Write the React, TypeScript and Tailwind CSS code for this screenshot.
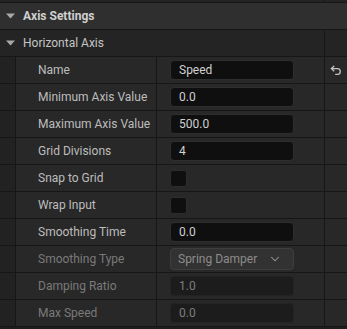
import { ChevronDown } from "lucide-react";

type Row = {
  label: string;
  kind: "text" | "check" | "select";
  value?: string;
  disabled?: boolean;
  reset?: boolean;
};

const rows: Row[] = [
  { label: "Name", kind: "text", value: "Speed", reset: true },
  { label: "Minimum Axis Value", kind: "text", value: "0.0" },
  { label: "Maximum Axis Value", kind: "text", value: "500.0" },
  { label: "Grid Divisions", kind: "text", value: "4" },
  { label: "Snap to Grid", kind: "check" },
  { label: "Wrap Input", kind: "check" },
  { label: "Smoothing Time", kind: "text", value: "0.0" },
  { label: "Smoothing Type", kind: "select", value: "Spring Damper", disabled: true },
  { label: "Damping Ratio", kind: "text", value: "1.0", disabled: true },
  { label: "Max Speed", kind: "text", value: "0.0", disabled: true },
];

function Caret() {
  return (
    <svg width="9" height="6" viewBox="0 0 9 6" className="shrink-0">
      <path d="M0 0.5 H9 L4.5 5.5 Z" fill="#a8a8a8" />
    </svg>
  );
}

function ResetIcon() {
  return (
    <svg width="12" height="11" viewBox="0 0 12 11" fill="none" stroke="#c4c4c4" strokeWidth="1.3">
      <path d="M4.2 1 L1.4 3.6 L4.2 6.2" />
      <path d="M1.6 3.6 H7.4 a2.9 2.9 0 0 1 0 5.8 H5.2" />
    </svg>
  );
}

function Value({ row }: { row: Row }) {
  if (row.kind === "check") {
    return <div className="w-[17px] h-[17px] rounded-[3px] bg-[#0f0f0f] border border-[#2c2c2c]" />;
  }
  if (row.kind === "select") {
    return (
      <div className="w-[124px] h-[22px] rounded-[4px] bg-[#323232] border border-[#3e3e3e] flex items-center justify-between pl-[7px] pr-[11px] text-[#8c8c8c]">
        <span>{row.value}</span>
        <ChevronDown size={14} strokeWidth={1.8} className="text-[#9a9a9a]" />
      </div>
    );
  }
  return (
    <div
      className={`w-[124px] h-[20px] rounded-[4px] flex items-center pl-[8px] ${
        row.disabled
          ? "bg-[#1c1c1c] border border-[#232323] text-[#7e7e7e]"
          : "bg-[#0f0f0f] border border-[#2e2e2e] text-[#d0d0d0]"
      }`}
    >
      {row.value}
    </div>
  );
}

export default function App() {
  return (
    <div
      className="w-[347px] h-[329px] bg-[#161616] overflow-hidden flex flex-col gap-px text-[12px] leading-none"
      style={{ fontFamily: "Roboto, 'Liberation Sans', sans-serif" }}
    >
      {/* cut-off row above */}
      <div className="h-[2px] flex gap-px shrink-0">
        <div className="w-[324px] bg-[#242424]" />
        <div className="flex-1 bg-[#242424]" />
      </div>

      {/* Axis Settings */}
      <div className="h-[26px] bg-[#2f2f2f] flex items-center gap-[8px] pl-[6px] shrink-0">
        <Caret />
        <span className="font-bold text-[#d0d0d0]">Axis Settings</span>
      </div>

      {/* Horizontal Axis */}
      <div className="h-[26px] flex gap-px shrink-0">
        <div className="w-[324px] bg-[#242424] flex items-center gap-[8px] pl-[6px]">
          <Caret />
          <span className="text-[#c4c4c4]">Horizontal Axis</span>
        </div>
        <div className="flex-1 bg-[#242424]" />
      </div>

      {rows.map((row) => (
        <div key={row.label} className="h-[26px] flex gap-px shrink-0">
          <div className="w-[15px] bg-[#222222]" />
          <div
            className={`w-[140px] bg-[#282828] flex items-center pl-[22px] ${
              row.disabled ? "text-[#7a7a7a]" : "text-[#bdbdbd]"
            }`}
          >
            {row.label}
          </div>
          <div className="w-[167px] bg-[#282828] flex items-center pl-[13px]">
            <Value row={row} />
          </div>
          <div className="flex-1 bg-[#282828] flex items-center justify-center">
            {row.reset && <ResetIcon />}
          </div>
        </div>
      ))}

      <div className="flex-1 bg-[#1e1e1e]" />
    </div>
  );
}
